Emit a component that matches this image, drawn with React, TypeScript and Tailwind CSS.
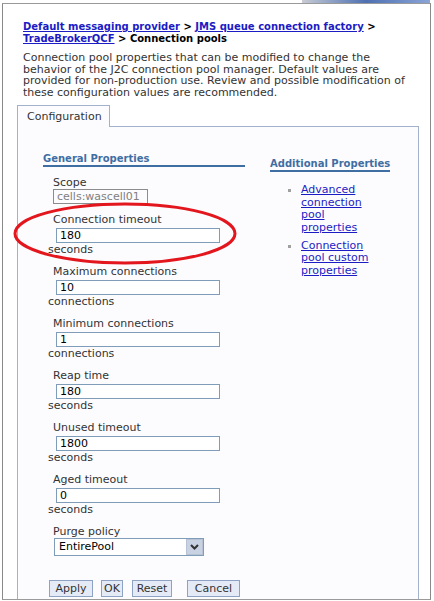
import React from 'react'

const font = { fontFamily: '"DejaVu Sans", Verdana, sans-serif' }

type Field = { label: string; value: string; unit: string }

const fields: Field[] = [
  { label: 'Connection timeout', value: '180', unit: 'seconds' },
  { label: 'Maximum connections', value: '10', unit: 'connections' },
  { label: 'Minimum connections', value: '1', unit: 'connections' },
  { label: 'Reap time', value: '180', unit: 'seconds' },
  { label: 'Unused timeout', value: '1800', unit: 'seconds' },
  { label: 'Aged timeout', value: '0', unit: 'seconds' },
]

function FieldRow({ label, value, unit }: Field) {
  return (
    <div className="mt-[10px] flex flex-col">
      <div className="pl-[10px] text-[11px] leading-[12px] text-[#333]">{label}</div>
      <div className="ml-[13px] mt-[2px] flex h-[15px] w-[164px] items-center border border-[#7f9db9] bg-white pl-[3px] text-[11px] leading-[12px] text-black">
        {value}
      </div>
      <div className="mt-[1px] pl-[5px] text-[11px] leading-[12px] text-[#333]">{unit}</div>
    </div>
  )
}

function Btn({ label, className }: { label: string; className: string }) {
  return (
    <div
      className={`flex h-[17px] items-center justify-center border border-[#8ea3c4] bg-[#e4ebf6] text-[11px] leading-[12px] text-[#333] ${className}`}
    >
      {label}
    </div>
  )
}

export default function App() {
  return (
    <div className="relative h-[601px] w-[434px] overflow-hidden bg-white" style={font}>
      <div className="flex h-[3px]">
        <div className="ml-[302px] h-[3px] w-[128px] bg-gradient-to-r from-[#c9ccd3] via-[#4f70b2] to-[#8aa4d6]" />
      </div>
      <div className="ml-[2px] flex h-[597px] w-[429px] flex-col overflow-hidden border-x border-t border-b border-x-[#8a8a8a] border-t-[#9a9a9a] border-b-[#9a9a9a] bg-white">
        <div className="pl-[20px] pr-[17px] pt-[17px]">
          <div className="text-[10px] font-bold leading-[12px] text-black">
            <span className="text-[#1c1cc4] underline">Default messaging provider</span> &gt;{' '}
            <span className="text-[#1c1cc4] underline">JMS queue connection factory</span> &gt;{' '}
            <span className="text-[#1c1cc4] underline">TradeBrokerQCF</span> &gt; Connection pools
          </div>
          <p className="mt-[7px] text-[11px] leading-[11.6px] text-[#333]">
            Connection pool properties that can be modified to change the behavior of the J2C connection pool manager.
            Default values are provided for non-production use. Review and possible modification of these
            configuration values are recommended.
          </p>
        </div>

        <div className="ml-[14px] mt-[7px] flex flex-1 flex-col">
          <div className="relative z-10 -mb-px flex h-[22px] w-[93px] items-center border-x border-t border-[#a3b2cc] bg-[#fcfcfe] pl-[9px] text-[11px] text-[#333]">
            Configuration
          </div>
          <div className="flex w-[402px] flex-1 border-x border-t border-[#a3b2cc] bg-[#fcfcfe]">
            <div className="ml-[25px] flex w-[202px] flex-col pt-[26px]">
              <div className="h-[14px] border-b-2 border-[#3f6ea3] text-[10px] font-bold leading-[12px] text-[#3f6ea3]">
                General Properties
              </div>
              <div className="mt-[10px] flex flex-col">
                <div className="pl-[10px] text-[11px] leading-[12px] text-[#333]">Scope</div>
                <div className="ml-[10px] flex h-[15px] w-[95px] items-center border border-[#8c8c8c] pl-[3px] text-[11px] leading-[12px] text-[#808080]">
                  cells:wascell01
                </div>
              </div>
              {fields.map((f) => (
                <FieldRow key={f.label} {...f} />
              ))}
              <div className="mt-[10px] flex flex-col">
                <div className="pl-[10px] text-[11px] leading-[12px] text-[#333]">Purge policy</div>
                <div className="ml-[11px] flex h-[18px] w-[150px] items-center border border-[#7f9db9] bg-white">
                  <span className="flex-1 pl-[4px] text-[11px] leading-[12px] text-black">EntirePool</span>
                  <span className="flex h-[16px] w-[17px] items-center justify-center border border-[#b7c2d4] bg-[#c9d2e3]">
                    <svg width="9" height="6" viewBox="0 0 9 6">
                      <path d="M1 1 L4.5 4.5 L8 1" fill="none" stroke="#333" strokeWidth="2" />
                    </svg>
                  </span>
                </div>
              </div>
              <div className="mt-[24px] flex pl-[6px]">
                <Btn label="Apply" className="w-[44px]" />
                <Btn label="OK" className="ml-[8px] w-[22px]" />
                <Btn label="Reset" className="ml-[9px] w-[40px]" />
                <Btn label="Cancel" className="ml-[15px] w-[53px]" />
              </div>
            </div>

            <div className="ml-[25px] flex flex-col pt-[31px]">
              <div className="h-[14px] w-fit border-b-2 border-[#3f6ea3] text-[10px] font-bold leading-[12px] text-[#3f6ea3]">
                Additional Properties
              </div>
              <ul className="mt-[12px] flex flex-col gap-[6px]">
                {['Advanced connection pool properties', 'Connection pool custom properties'].map((t) => (
                  <li key={t} className="flex">
                    <span className="ml-[18px] mt-[5px] h-[3px] w-[3px] bg-[#a0a0a0]" />
                    <span className="ml-[10px] w-[74px] text-[11px] leading-[12.4px] text-[#1c1cc4] underline">{t}</span>
                  </li>
                ))}
              </ul>
            </div>
          </div>
        </div>
      </div>

      <svg className="pointer-events-none absolute left-0 top-0" width="434" height="601">
        <ellipse cx="125" cy="233.5" rx="110" ry="29.5" fill="none" stroke="#e3161d" strokeWidth="3" />
      </svg>
    </div>
  )
}
